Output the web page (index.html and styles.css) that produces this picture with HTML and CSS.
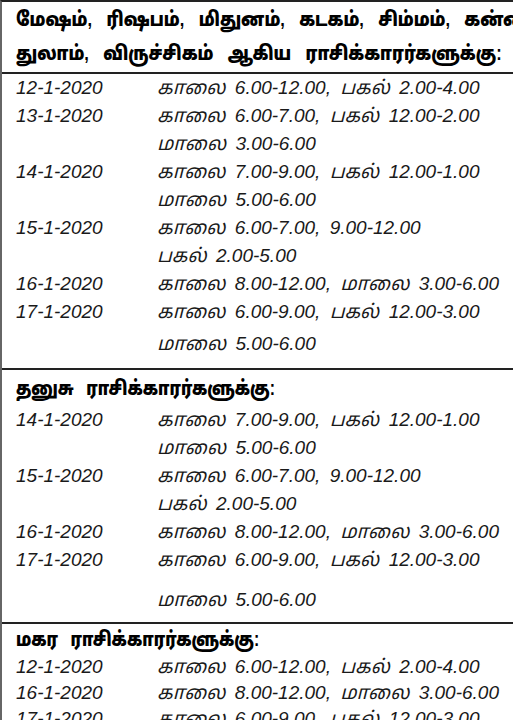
FILE: index.html
```html
<!DOCTYPE html>
<html lang="ta">
<head>
<meta charset="utf-8">
<title>ராசி நேரங்கள்</title>
<link rel="stylesheet" href="styles.css">
</head>
<body>
<div class="sheet">
  <section class="block">
    <h2 class="head head-main"><span class="hl">மேஷம், ரிஷபம், மிதுனம், கடகம், சிம்மம், கன்னி,</span><span class="hl">துலாம், விருச்சிகம் ஆகிய ராசிக்காரர்களுக்கு:</span></h2>
    <div class="rows">
      <div class="d">12-1-2020</div><div class="t">காலை 6.00-12.00, பகல் 2.00-4.00</div>
      <div class="d">13-1-2020</div><div class="t">காலை 6.00-7.00, பகல் 12.00-2.00</div>
      <div class="d"></div><div class="t">மாலை 3.00-6.00</div>
      <div class="d">14-1-2020</div><div class="t">காலை 7.00-9.00, பகல் 12.00-1.00</div>
      <div class="d"></div><div class="t">மாலை 5.00-6.00</div>
      <div class="d">15-1-2020</div><div class="t">காலை 6.00-7.00, 9.00-12.00</div>
      <div class="d"></div><div class="t">பகல் 2.00-5.00</div>
      <div class="d">16-1-2020</div><div class="t">காலை 8.00-12.00, மாலை 3.00-6.00</div>
      <div class="d">17-1-2020</div><div class="t">காலை 6.00-9.00, பகல் 12.00-3.00</div>
      <div class="d last"></div><div class="t last">மாலை 5.00-6.00</div>
    </div>
  </section>
  <section class="block block-2">
    <h2 class="head head-sub"><span class="hs">தனுசு ராசிக்காரர்களுக்கு:</span></h2>
    <div class="rows">
      <div class="d">14-1-2020</div><div class="t">காலை 7.00-9.00, பகல் 12.00-1.00</div>
      <div class="d"></div><div class="t">மாலை 5.00-6.00</div>
      <div class="d">15-1-2020</div><div class="t">காலை 6.00-7.00, 9.00-12.00</div>
      <div class="d"></div><div class="t">பகல் 2.00-5.00</div>
      <div class="d">16-1-2020</div><div class="t">காலை 8.00-12.00, மாலை 3.00-6.00</div>
      <div class="d">17-1-2020</div><div class="t">காலை 6.00-9.00, பகல் 12.00-3.00</div>
      <div class="d last"></div><div class="t last">மாலை 5.00-6.00</div>
    </div>
  </section>
  <section class="block block-3">
    <h2 class="head head-sub"><span class="hs">மகர ராசிக்காரர்களுக்கு:</span></h2>
    <div class="rows">
      <div class="d">12-1-2020</div><div class="t">காலை 6.00-12.00, பகல் 2.00-4.00</div>
      <div class="d">16-1-2020</div><div class="t">காலை 8.00-12.00, மாலை 3.00-6.00</div>
      <div class="d">17-1-2020</div><div class="t">காலை 6.00-9.00, பகல் 12.00-3.00</div>
    </div>
  </section>
</div>
</body>
</html>
```
FILE: styles.css
```css
html, body {
  margin: 0;
  padding: 0;
  background: #ffffff;
  overflow: hidden;
}
body {
  font-family: "Liberation Sans", "Noto Sans Tamil", "Noto Sans", sans-serif;
  color: #1a1a1a;
}
.sheet {
  width: 560px;
  border-top: 2px solid #222;
  border-left: 2px solid #666;
}
.block {
  border-bottom: 2px solid #222;
}
.head {
  margin: 0;
  padding-left: 14px;
  font-weight: 900;
  color: #000;
  white-space: nowrap;
}
.head-main {
  font-size: 20px;
  line-height: 34px;
  padding-bottom: 2px;
  word-spacing: 12px;
  border-bottom: 2px solid #222;
}
.hl,
.hs {
  display: block;
  transform: scaleX(0.82);
  transform-origin: left center;
}
.hs {
  transform: scaleX(0.79);
}
.head-sub {
  font-size: 20px;
  line-height: 36px;
  word-spacing: 10px;
}
.rows {
  display: grid;
  grid-template-columns: 141px 1fr;
  padding-left: 14px;
  padding-bottom: 10px;
  font-style: italic;
  font-size: 19px;
  line-height: 28px;
  word-spacing: 4px;
  white-space: nowrap;
}
.last {
  padding-top: 4px;
}
.block-2 .last {
  padding-top: 12px;
}
.block-2 .rows {
  padding-bottom: 8px;
}
.block-3 .head-sub {
  line-height: 30px;
}
.block-3 .rows {
  line-height: 26px;
}
```
